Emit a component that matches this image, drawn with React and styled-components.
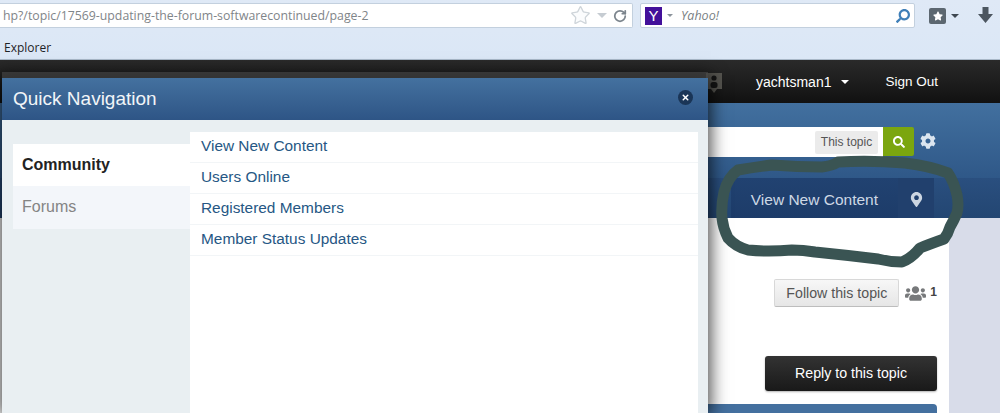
import styled, { createGlobalStyle } from 'styled-components';
import { RotateCw, Star, X } from 'lucide-react';
import { FaCog, FaMapMarkerAlt, FaSearch, FaStar, FaUsers } from 'react-icons/fa';

const GlobalStyle = createGlobalStyle`
  html, body {
    margin: 0;
    padding: 0;
    background: #d8dce9;
  }
  * {
    box-sizing: border-box;
  }
`;

const App = () => {
  return (
    <Window>
      <GlobalStyle />
      <BrowserChrome>
        <AddressRow>
          <UrlBox>
            <UrlText>hp?/topic/17569-updating-the-forum-softwarecontinued/page-2</UrlText>
            <Star size={21} color='#cfd5da' fill='#fbfcfd' strokeWidth={1.5} />
            <Caret $color='#c6ccd2' $size={5} />
            <RotateCw size={14} color='#7c858d' strokeWidth={3} />
          </UrlBox>
          <SearchBox>
            <YahooLogo>Y</YahooLogo>
            <Caret $color='#8b939b' $size={3} />
            <YahooText>Yahoo!</YahooText>
            <FlippedSearch>
              <FaSearch size={14} color='#3f7fb8' />
            </FlippedSearch>
          </SearchBox>
          <BookmarkIcon>
            <FaStar size={10} color='#fff' />
          </BookmarkIcon>
          <ToolbarCaret $color='#3e4750' $size={4} />
          <DownloadIcon viewBox='0 0 15 16'>
            <path d='M4.5 0 H10.5 V7 H15 L7.5 16 L0 7 H4.5 Z' fill='#4c5660' />
          </DownloadIcon>
        </AddressRow>
        <BookmarkRow>Explorer</BookmarkRow>
      </BrowserChrome>

      <ForumPage>
        <TopBar>
          <MemberIcon viewBox='0 0 18 21'>
            <path d='M1 0 H17 V16 H12 L9 20 L6 16 H1 Z' fill='#55544f' />
            <circle cx='9' cy='5' r='2.6' fill='#151515' />
            <rect x='5.5' y='9' width='7' height='6' rx='2.5' fill='#151515' />
          </MemberIcon>
          <UserName>yachtsman1</UserName>
          <Caret $color='#fff' $size={4.5} />
          <SignOut>Sign Out</SignOut>
        </TopBar>
        <SearchBand>
          <SearchField>
            <ScopePill>This topic</ScopePill>
          </SearchField>
          <SearchButton>
            <FaSearch size={12} color='#fff' />
          </SearchButton>
          <GearLink>
            <FaCog size={16} color='#dbe5ef' />
          </GearLink>
        </SearchBand>
        <NavBar>
          <NavLink>View New Content</NavLink>
          <PinCell>
            <FaMapMarkerAlt size={15} color='#ccd6e2' />
          </PinCell>
        </NavBar>
        <Content>
          <FollowRow>
            <FollowButton>Follow this topic</FollowButton>
            <FollowerIcon>
              <FaUsers size={21} color='#77797b' />
            </FollowerIcon>
            <FollowerCount>1</FollowerCount>
          </FollowRow>
          <ReplyButton>Reply to this topic</ReplyButton>
          <PostHeader />
        </Content>

        <Modal>
          <ModalHeader>
            <ModalTitle>Quick Navigation</ModalTitle>
            <CloseButton>
              <X size={9} color='#fff' strokeWidth={4} />
            </CloseButton>
          </ModalHeader>
          <ModalBody>
            <Tabs>
              <Tab $active>Community</Tab>
              <Tab>Forums</Tab>
            </Tabs>
            <LinkPanel>
              <LinkRow>View New Content</LinkRow>
              <LinkRow>Users Online</LinkRow>
              <LinkRow>Registered Members</LinkRow>
              <LinkRow>Member Status Updates</LinkRow>
            </LinkPanel>
          </ModalBody>
        </Modal>
      </ForumPage>

      {/* hand drawn ring from the screenshot */}
      <Scribble viewBox='0 0 1000 413'>
        <path d='M738 170 Q755 167 772 165 Q797 167 822 167 Q832 166 838 162 Q870 160 905 163 Q930 166 948 173 Q954 182 957 195 Q959 205 957 213 Q954 220 950 227 Q948 234 944 239 Q930 244 920 248 Q912 258 902 262 Q890 262 878 259 Q845 255 815 252 Q803 250 792 250 Q768 252 748 250 Q736 247 728 238 Q723 228 722 218 Q721 205 724 192 Q728 177 738 170 Z' />
      </Scribble>
    </Window>
  );
};
export default App;

const Window = styled.div`
  position: relative;
  width: 1000px;
  height: 413px;
  overflow: hidden;
  font-family: 'Liberation Sans', Arial, sans-serif;
`;

const BrowserChrome = styled.div`
  height: 60px;
  background: linear-gradient(#dfe9f6, #dbe7f6);
  border-bottom: 1px solid #a9b8c8;
`;

const AddressRow = styled.div`
  height: 31px;
  padding-top: 3px;
  display: flex;
  align-items: flex-start;
`;

const UrlBox = styled.div`
  width: 633px;
  height: 25px;
  background: #fff;
  border: 1px solid #c3d0de;
  border-left: none;
  border-radius: 0 2px 2px 0;
  display: flex;
  align-items: center;
  gap: 6px;
  padding: 0 5px 0 3px;
`;

const UrlText = styled.div`
  flex: 1;
  font-family: 'Open Sans', sans-serif;
  font-size: 12.3px;
  color: #7f8589;
  white-space: nowrap;
`;

const SearchBox = styled.div`
  width: 275px;
  height: 25px;
  margin-left: 7px;
  background: #fff;
  border: 1px solid #c3d0de;
  border-radius: 2px;
  display: flex;
  align-items: center;
  padding: 0 2px 0 4px;
  gap: 5px;
`;

const YahooLogo = styled.div`
  width: 17px;
  height: 18px;
  background: #43109a;
  color: #fff;
  font-size: 15px;
  line-height: 18px;
  text-align: center;
`;

const YahooText = styled.div`
  flex: 1;
  margin-left: 3px;
  font-family: 'Open Sans', sans-serif;
  font-size: 12.5px;
  font-style: italic;
  color: #7a7f84;
`;

const FlippedSearch = styled.div`
  display: flex;
  margin-right: 2px;
  transform: scaleX(-1);
`;

const Caret = styled.span`
  flex: none;
  width: 0;
  height: 0;
  border-left: ${(p) => p.$size}px solid transparent;
  border-right: ${(p) => p.$size}px solid transparent;
  border-top: ${(p) => p.$size}px solid ${(p) => p.$color};
`;

const ToolbarCaret = styled(Caret)`
  margin-top: 11px;
`;

const BookmarkIcon = styled.div`
  width: 17px;
  height: 16px;
  margin: 5px 5px 0 14px;
  background: #5c6770;
  border-radius: 2px;
  display: flex;
  align-items: center;
  justify-content: center;
`;

const DownloadIcon = styled.svg`
  width: 15px;
  height: 16px;
  margin: 4px 0 0 19px;
`;

const BookmarkRow = styled.div`
  padding: 8px 0 0 4px;
  font-family: 'Open Sans', sans-serif;
  font-size: 12px;
  color: #1f2326;
`;

const ForumPage = styled.div`
  position: relative;
  height: 353px;
`;

const TopBar = styled.div`
  height: 43px;
  padding-right: 62px;
  background: linear-gradient(#2a2a2a, #111);
  display: flex;
  align-items: center;
  justify-content: flex-end;
`;

const MemberIcon = styled.svg`
  width: 18px;
  height: 21px;
  margin: 4px 33px 0 0;
`;

const UserName = styled.div`
  margin-right: 10px;
  font-size: 14px;
  color: #fff;
`;

const SignOut = styled.div`
  margin-left: 36px;
  font-size: 13.5px;
  color: #fff;
`;

const SearchBand = styled.div`
  height: 75px;
  padding: 24px 64px 0 0;
  background: linear-gradient(#42709f, #2f5888);
  display: flex;
  align-items: flex-start;
  justify-content: flex-end;
`;

const SearchField = styled.div`
  width: 300px;
  height: 30px;
  padding-right: 5px;
  background: #fff;
  display: flex;
  align-items: center;
  justify-content: flex-end;
`;

const ScopePill = styled.div`
  width: 63px;
  height: 23px;
  background: #ebebeb;
  border-radius: 2px;
  font-size: 12px;
  line-height: 23px;
  text-align: center;
  color: #555;
`;

const SearchButton = styled.div`
  width: 31px;
  height: 29px;
  background: #7ba60f;
  border-radius: 0 2px 2px 0;
  display: flex;
  align-items: center;
  justify-content: center;
`;

const GearLink = styled.div`
  display: flex;
  margin: 6px 0 0 6px;
`;

const NavBar = styled.div`
  height: 40px;
  padding-right: 66px;
  background: linear-gradient(#2a4f7f, #234672);
  display: flex;
  align-items: stretch;
  justify-content: flex-end;
`;

const NavLink = styled.div`
  padding: 0 20px;
  background: linear-gradient(#214271, #1d3c69);
  font-size: 15.5px;
  line-height: 43px;
  color: #cdd8e5;
`;

const PinCell = styled.div`
  width: 36px;
  padding-top: 2px;
  background: #21406d;
  display: flex;
  align-items: center;
  justify-content: center;
`;

const Content = styled.div`
  width: 949px;
  height: 195px;
  padding: 61px 12px 0 0;
  background: #fff;
  display: flex;
  flex-direction: column;
  align-items: flex-end;
`;

const FollowRow = styled.div`
  height: 28px;
  display: flex;
  align-items: center;
`;

const FollowButton = styled.div`
  width: 125px;
  height: 28px;
  background: linear-gradient(#f7f7f7, #e6e6e6);
  border: 1px solid #d8d8d8;
  border-bottom-color: #bdbdbd;
  border-radius: 2px;
  font-size: 14.2px;
  line-height: 26px;
  text-align: center;
  color: #555;
`;

const FollowerIcon = styled.div`
  display: flex;
  margin-left: 6px;
`;

const FollowerCount = styled.div`
  margin: -2px 0 0 4px;
  font-size: 12px;
  font-weight: bold;
  color: #444;
`;

const ReplyButton = styled.div`
  width: 172px;
  height: 35px;
  margin-top: 49px;
  background: linear-gradient(#333, #191919);
  border-radius: 3px;
  box-shadow: 0 1px 2px rgba(0, 0, 0, 0.3);
  font-size: 14.2px;
  line-height: 35px;
  text-align: center;
  color: #fff;
`;

const PostHeader = styled.div`
  width: 229px;
  height: 9px;
  margin-top: 13px;
  background: #44709f;
  border-radius: 0 4px 0 0;
`;

const Modal = styled.div`
  position: absolute;
  left: 2px;
  top: 18px;
  bottom: 0;
  width: 706px;
  background: #e9eff2;
  box-shadow: 0 -6px 0 0 rgba(75, 75, 75, 0.6), 0 0 16px 3px rgba(0, 0, 0, 0.7);
  display: flex;
  flex-direction: column;
`;

const ModalHeader = styled.div`
  height: 42px;
  flex: none;
  padding: 0 15px 0 11px;
  background: linear-gradient(#44719f, #2e5586);
  display: flex;
  align-items: center;
  justify-content: space-between;
`;

const ModalTitle = styled.div`
  font-size: 19px;
  color: #f2f5f8;
`;

const CloseButton = styled.div`
  width: 15px;
  height: 15px;
  margin-top: -4px;
  background: #1a3557;
  border-radius: 50%;
  display: flex;
  align-items: center;
  justify-content: center;
`;

const ModalBody = styled.div`
  flex: 1;
  min-height: 0;
  padding: 12px 10px 0 11px;
  display: flex;
  align-items: stretch;
`;

const Tabs = styled.div`
  width: 177px;
  flex: none;
  margin-top: 12px;
`;

const Tab = styled.div`
  height: ${(p) => (p.$active ? '42px' : '43px')};
  padding-left: 9px;
  background: ${(p) => (p.$active ? '#fff' : '#f3f6fa')};
  font-size: 16px;
  font-weight: ${(p) => (p.$active ? 'bold' : 'normal')};
  line-height: 42px;
  color: ${(p) => (p.$active ? '#222' : '#848484')};
`;

const LinkPanel = styled.div`
  flex: 1;
  background: #fff;
`;

const LinkRow = styled.div`
  height: 31px;
  padding-left: 11px;
  border-bottom: 1px solid #f2f5f7;
  font-size: 15.4px;
  line-height: 28px;
  color: #265784;
`;

const Scribble = styled.svg`
  position: absolute;
  left: 0;
  top: 0;
  width: 1000px;
  height: 413px;
  pointer-events: none;

  path {
    fill: none;
    stroke: #3a5453;
    stroke-width: 11;
    stroke-linejoin: round;
  }
`;
